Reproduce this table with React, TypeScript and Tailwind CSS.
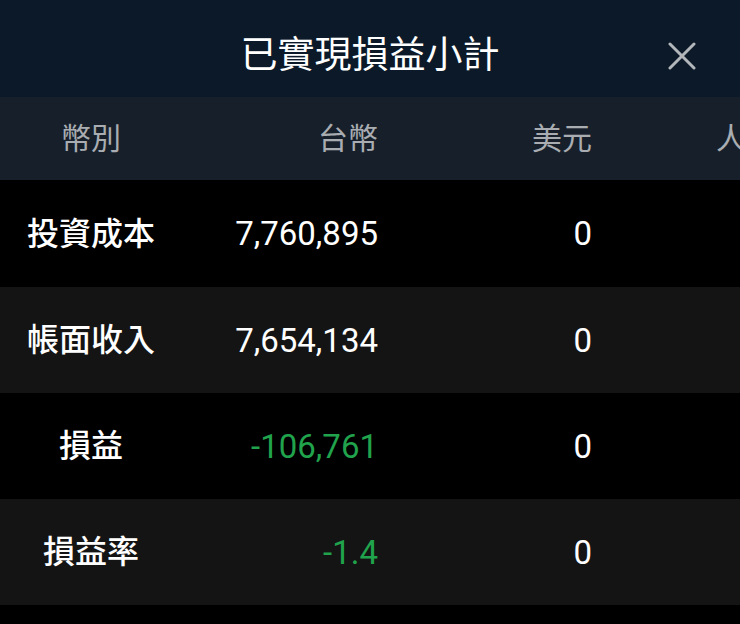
const rows = [
  { label: "投資成本", twd: "7,760,895", usd: "0", green: false },
  { label: "帳面收入", twd: "7,654,134", usd: "0", green: false },
  { label: "損益", twd: "-106,761", usd: "0", green: true },
  { label: "損益率", twd: "-1.4", usd: "0", green: true },
];

export default function App() {
  return (
    <div
      className="h-[624px] w-[740px] overflow-hidden bg-black"
      style={{ fontFamily: 'Roboto, "Noto Sans CJK TC", sans-serif' }}
    >
      <header className="relative flex h-[97px] items-center justify-center bg-[#0b1929] pt-[13px]">
        <h1 className="text-[37px] font-normal leading-none text-white">已實現損益小計</h1>
        <button className="absolute right-[44px] top-[42px] text-[#b3b6ba]" aria-label="close">
          <svg width="28" height="28" viewBox="0 0 28 28" fill="none" stroke="currentColor" strokeWidth="3" strokeLinecap="round">
            <path d="M2 2 L26 26 M26 2 L2 26" />
          </svg>
        </button>
      </header>

      <div className="flex h-[83px] items-center whitespace-nowrap bg-[#17202a] text-[30px] leading-none text-[#a9adb2]">
        <div className="w-[182px] shrink-0 text-center">幣別</div>
        <div className="w-[196px] shrink-0 text-right">台幣</div>
        <div className="w-[214px] shrink-0 text-right">美元</div>
        <div className="w-[214px] shrink-0 text-right">人民幣</div>
      </div>

      {rows.map((r, i) => (
        <div
          key={r.label}
          className={`flex items-center whitespace-nowrap text-[33px] leading-none ${
            i === 0 ? "h-[107px]" : "h-[106px]"
          } ${i % 2 === 1 ? "bg-[#141414]" : "bg-black"}`}
        >
          <div className="w-[182px] shrink-0 text-center text-[32px] font-medium text-white">{r.label}</div>
          <div className={`w-[196px] shrink-0 text-right ${r.green ? "text-[#20a34c]" : "text-white"}`}>
            {r.twd}
          </div>
          <div className="w-[214px] shrink-0 text-right text-white">{r.usd}</div>
        </div>
      ))}
    </div>
  );
}
